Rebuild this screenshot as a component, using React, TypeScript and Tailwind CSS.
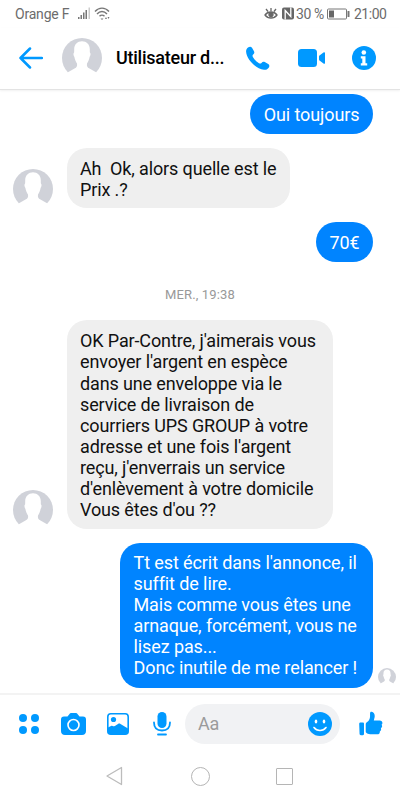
import type { ReactNode } from "react";

const Avatar = ({ className }: { className: string }) => (
  <svg viewBox="0 0 40 40" className={className}>
    <circle cx="20" cy="20" r="20" fill="#d0d2d9" />
    <path
      d="M20 3.300c4.500 0 7.800 3 7.800 8 0 1.500 0 2.200.1 3.200 1 .5.800 3-.3 4.500-.5 3-1.600 5-2.600 6.500-.4 2.500.2 4 2.500 5L34.500 34.500V40H5.500v-5.500l7-4c2.300-1 2.900-2.500 2.500-5-1-1.500-2.100-3.500-2.600-6.500-1.100-1.500-1.300-4-.3-4.500.1-1 .1-1.700.1-3.200 0-5 3.300-8 7.800-8Z"
      fill="white"
    />
  </svg>
);

const Received = ({ children, className = "" }: { children: ReactNode; className?: string }) => (
  <div className="flex items-end pl-[13px]">
    <Avatar className="w-10 h-10 mb-[-1px] mr-[14px] shrink-0" />
    <div
      className={`bg-[#efefef] text-[#111111] rounded-[20px] px-[13px] pt-[10px] pb-[8px] tracking-[-0.13px] whitespace-pre ${className}`}
    >
      {children}
    </div>
  </div>
);

const Sent = ({ children, className = "" }: { children: ReactNode; className?: string }) => (
  <div
    className={`bg-[#0084ff] text-white rounded-[20px] px-[13.500px] pt-[9px] pb-[9px] tracking-[-0.1px] whitespace-pre ${className}`}
  >
    {children}
  </div>
);

const StatusBar = () => (
  <div className="h-7 flex items-center justify-between pl-[15px] pr-[14px] text-sm text-[#6c6c6c]">
    <div className="flex items-center">
      <span className="w-[62px] tracking-[-0.2px]">Orange F</span>
      <svg width="14" height="14" viewBox="0 0 14 14" fill="#777">
        <rect x="1" y="10" width="1.500" height="2" />
        <rect x="3.500" y="8" width="1.500" height="4" />
        <rect x="6" y="5.500" width="1.500" height="6.500" />
        <rect x="8.500" y="3" width="1.500" height="9" />
        <rect x="11.500" y="0.500" width="1.500" height="11.500" fill="#ccc" />
      </svg>
      <svg width="17" height="14" viewBox="0 0 17 14" fill="none" stroke="#777" strokeWidth="1.400" className="ml-[3px]">
        <path d="M1 4.500c4-4.500 10-4.500 14 0M3 7c3-3.300 7-3.300 10 0M5.500 9.300c1.500-1.600 3.500-1.600 5 0" />
        <path d="M6.500 11.500h3l-1.500 1.500Z" fill="#777" stroke="none" />
        <path d="M11 12l1-2 1 2ZM13.500 10l1 2 1-2Z" fill="#777" stroke="none" />
      </svg>
    </div>
    <div className="flex items-center">
      <svg width="14" height="13" viewBox="0 0 14 13" fill="none" stroke="#666" strokeWidth="1.300" className="mr-[3px]">
        <path d="M1 8c3-4 9-4 12 0-3 4-9 4-12 0ZM7 1v3M2 2l2 2.500M12 2l-2 2.500" />
        <circle cx="7" cy="7.500" r="2" fill="#666" />
      </svg>
      <svg width="14" height="13" viewBox="0 0 14 13" className="mr-px">
        <rect x="1" y="0.500" width="12" height="12" rx="2" fill="#666" />
        <path d="M4.200 12.500V3.500l5.600 6V0.500" fill="none" stroke="white" strokeWidth="1.300" />
      </svg>
      <span className="w-[31px] whitespace-nowrap tracking-[-0.4px]">30 %</span>
      <svg width="23" height="12" viewBox="0 0 23 12" className="mr-1">
        <rect x="0.500" y="1" width="19" height="10" rx="1" fill="none" stroke="#777" />
        <rect x="2" y="2.500" width="5" height="7" fill="#666" />
        <rect x="20.500" y="3" width="2" height="6" rx="0.500" fill="#777" />
      </svg>
      <span className="w-8 whitespace-nowrap tracking-[-0.5px]">21:00</span>
    </div>
  </div>
);

const Header = () => (
  <header className="h-[62px] flex items-center pl-[19px] pb-[1px] border-b border-[#e3e3e3] shadow-[0_1px_2px_rgba(0,0,0,0.06)]">
    <svg width="24" height="22" viewBox="0 0 24 22" fill="none" stroke="#0099ff" strokeWidth="2.500" strokeLinecap="round" strokeLinejoin="round">
      <path d="M23 11H1.500M11 1.500 1.500 11l9.500 9.500" />
    </svg>
    <Avatar className="w-10 h-10 ml-[19px] mr-[14px]" />
    <h1 className="w-[130px] text-[18px] font-medium tracking-[-0.25px] text-black whitespace-nowrap">Utilisateur d...</h1>
    <svg width="24" height="24" viewBox="0 0 24 24" fill="#0099ff">
      <path d="M2 1.500C3.500.3 5 .3 6 1.800l2 3.500c.7 1.300.3 2.300-.8 3.200-.9.800-.8 1.600-.2 2.700 1.500 2.500 3.500 4.500 6 6 1 .5 1.800.5 2.500-.3 1-1.200 2-1.500 3.300-.8l3.400 2c1.500 1 1.500 2.300.3 3.800-1.200 1.400-2.700 2-4.500 1.800C9.500 22.500.700 13.500.100 5.800 0 4 .700 2.500 2 1.500Z" />
    </svg>
    <svg width="28" height="18" viewBox="0 0 28 18" fill="#0099ff" className="ml-[28px]">
      <rect x="0" y="0" width="19" height="18" rx="3.500" />
      <path d="M21 7.500c0-.7.300-1 .8-1.300l3.700-2.700c.8-.6 1.500-.3 1.500.6v9.800c0 .9-.7 1.200-1.500.6l-3.700-2.700c-.5-.4-.8-.7-.8-1.300Z" />
    </svg>
    <svg width="24" height="24" viewBox="0 0 24 24" className="ml-[26px]">
      <circle cx="12" cy="12" r="12" fill="#0099ff" />
      <circle cx="11.800" cy="6.500" r="2.300" fill="white" />
      <path d="M8.800 10.300h4.700v7h1.700v2.200H8.800v-2.200h1.500v-4.800H8.800Z" fill="white" />
    </svg>
  </header>
);

const Composer = () => (
  <div className="h-[59px] flex items-center pl-[19px] border-t-2 border-[#f3f3f3]">
    <svg width="20" height="20" viewBox="0 0 20 20" fill="#0099ff">
      <circle cx="4" cy="4" r="4" />
      <circle cx="16" cy="4" r="4" />
      <circle cx="4" cy="16" r="4" />
      <circle cx="16" cy="16" r="4" />
    </svg>
    <svg width="25" height="22" viewBox="0 0 25 22" className="ml-[22px]">
      <path d="M3 3.500h3.500L8.500 1c.5-.7 1-1 2-1h4c1 0 1.500.3 2 1l2 2.500H22c2 0 3 1 3 3V18c0 2.500-1.500 4-4 4H4c-2.500 0-4-1.500-4-4V6.500c0-2 1-3 3-3Z" fill="#0099ff" />
      <circle cx="12.500" cy="12" r="5.500" fill="#0099ff" stroke="white" strokeWidth="1.600" />
    </svg>
    <svg width="22" height="22" viewBox="0 0 22 22" className="ml-[21px]">
      <rect x="0.800" y="0.800" width="20.400" height="20.400" rx="3" fill="white" stroke="#0099ff" strokeWidth="1.600" />
      <circle cx="6.500" cy="6.500" r="2.600" fill="#0099ff" />
      <path d="M1 14.500 4 13c1-.5 1.500-.3 2.300.2C7.500 13.500 8 13 9 12.300l2-1.300c1-.6 1.700-.5 2.500 0l7.500 4.500V19c0 1.500-.5 2-2 2H3c-1.500 0-2-.5-2-2Z" fill="#0099ff" />
    </svg>
    <svg width="18" height="24" viewBox="0 0 18 24" className="ml-[24px]">
      <rect x="4.500" y="0" width="9" height="16" rx="4.500" fill="#0099ff" />
      <path d="M1 10.500c0 5 3 8 8 8s8-3 8-8M5 22.500h8" fill="none" stroke="#0099ff" strokeWidth="1.800" strokeLinecap="round" />
    </svg>
    <div className="ml-[14px] w-[155px] h-10 rounded-full bg-[#f1f2f4] flex items-center justify-between pl-[13px] pr-2 text-[18px] text-[#9b9b9b]">
      <span className="tracking-[-0.3px]">Aa</span>
      <svg width="24" height="24" viewBox="0 0 24 24">
        <circle cx="12" cy="12" r="12" fill="#0099ff" />
        <ellipse cx="8" cy="9.500" rx="1.300" ry="2" fill="white" />
        <ellipse cx="16" cy="9.500" rx="1.300" ry="2" fill="white" />
        <path d="M6 15.500c3 4 9 4 12 0" fill="none" stroke="white" strokeWidth="1.600" strokeLinecap="round" />
      </svg>
    </div>
    <svg width="24" height="25" viewBox="0 0 25 25" fill="#0099ff" className="ml-[19px]">
      <path d="M1.800 11.500h2.400c.6 0 1 .4 1 1v11c0 .8-.4 1.200-1.200 1.200H2c-.8 0-1.300-.4-1.400-1.200L.2 13c0-1 .6-1.500 1.600-1.500Z" />
      <path d="M7 13.500c0-1.200.5-2 1.500-2.600 2-1.300 3-3.400 3-6V2c0-1.300.6-2 1.700-1.800 2.800.5 3.800 3.500 2.800 6.800l-.6 2.500h6.100c2.800 0 3.800 2.600 2 4.300 1 1.300.8 2.800-.7 3.700.6 1.500.2 2.600-1.100 3.300.1 2-.9 2.900-2.700 2.900h-6c-2 0-3.500-.3-4.800-1-.8-.4-1.200-1-1.200-2Z" />
    </svg>
  </div>
);

const NavBar = () => (
  <nav className="h-12 flex items-center pl-[106px]">
    <svg width="17" height="20" viewBox="0 0 17 20" fill="none" stroke="#bcbcbc" strokeWidth="1.300" strokeLinejoin="round">
      <path d="M15.500 1.500v17L1 10Z" />
    </svg>
    <div className="w-[19px] h-[19px] rounded-full border border-[#b5b5b5] ml-[68px]" />
    <div className="w-[17px] h-[17px] rounded-[1px] border border-[#b5b5b5] ml-[66px]" />
  </nav>
);

export default function App() {
  return (
    <div className="w-[400px] h-[800px] bg-white font-[Roboto,sans-serif] flex flex-col overflow-hidden">
      <StatusBar />
      <Header />
      <main className="h-[604px] pt-[4.500px] flex flex-col text-[18px] leading-[21.150px]">
        <div className="flex justify-end pr-[27px]">
          <Sent className="h-10 leading-[23px]">Oui toujours</Sent>
        </div>
        <div className="mt-[13.500px]">
          <Received className="w-[223px]">{"Ah  Ok, alors quelle est le\nPrix .?"}</Received>
        </div>
        <div className="flex justify-end pr-[27px] mt-[13.500px]">
          <Sent className="h-10 leading-[23px]">70€</Sent>
        </div>
        <div className="h-[58.500px] pt-[22px] text-center text-[13px] tracking-[0.15px] text-[#999999]">MER., 19:38</div>
        <Received className="w-[266px]">
          {
            "OK Par-Contre, j'aimerais vous\nenvoyer l'argent en espèce\ndans une enveloppe via le\nservice de livraison de\ncourriers UPS GROUP à votre\nadresse et une fois l'argent\nreçu, j'enverrais un service\nd'enlèvement à votre domicile\nVous êtes d'ou ??"
          }
        </Received>
        <div className="flex justify-end items-end mt-[14px] pr-[4px]">
          <Sent className="w-[253px]">
            {
              "Tt est écrit dans l'annonce, il\nsuffit de lire.\nMais comme vous êtes une\narnaque, forcément, vous ne\nlisez pas...\nDonc inutile de me relancer !"
            }
          </Sent>
          <Avatar className="w-[18px] h-[18px] ml-[5px] mb-[2px]" />
        </div>
      </main>
      <Composer />
      <NavBar />
    </div>
  );
}
